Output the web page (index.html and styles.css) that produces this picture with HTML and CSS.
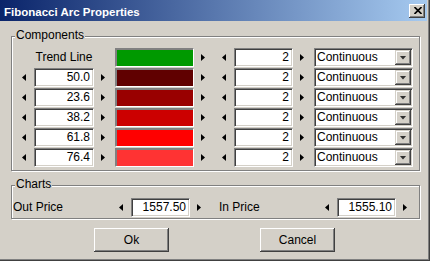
FILE: index.html
```html
<!DOCTYPE html>
<html>
<head>
<meta charset="utf-8">
<link rel="stylesheet" href="styles.css">
</head>
<body>
<div class="window">
  <div class="titlebar">
    <span class="title">Fibonacci Arc Properties</span>
    <span class="close"><svg width="8" height="7" viewBox="0 0 8 7"><path d="M0.5 0 L7.5 7 M7.5 0 L0.5 7" stroke="#000" stroke-width="1.6" fill="none"/></svg></span>
  </div>

  <div class="group components">
    <div class="group-title">Components</div>
    <div class="comp-grid">
      <span></span>
      <span class="label-cell">Trend Line</span>
      <span></span>
      <span class="swatch c1"></span>
      <span class="arr r"></span>
      <span class="arr l"></span>
      <span class="field num">2</span>
      <span class="arr r"></span>
      <span class="field select"><span>Continuous</span><span class="drop"><span class="down"></span></span></span>

      <span class="arr l"></span>
      <span class="field num">50.0</span>
      <span class="arr r"></span>
      <span class="swatch c2"></span>
      <span class="arr r"></span>
      <span class="arr l"></span>
      <span class="field num">2</span>
      <span class="arr r"></span>
      <span class="field select"><span>Continuous</span><span class="drop"><span class="down"></span></span></span>

      <span class="arr l"></span>
      <span class="field num">23.6</span>
      <span class="arr r"></span>
      <span class="swatch c3"></span>
      <span class="arr r"></span>
      <span class="arr l"></span>
      <span class="field num">2</span>
      <span class="arr r"></span>
      <span class="field select"><span>Continuous</span><span class="drop"><span class="down"></span></span></span>

      <span class="arr l"></span>
      <span class="field num">38.2</span>
      <span class="arr r"></span>
      <span class="swatch c4"></span>
      <span class="arr r"></span>
      <span class="arr l"></span>
      <span class="field num">2</span>
      <span class="arr r"></span>
      <span class="field select"><span>Continuous</span><span class="drop"><span class="down"></span></span></span>

      <span class="arr l"></span>
      <span class="field num">61.8</span>
      <span class="arr r"></span>
      <span class="swatch c5"></span>
      <span class="arr r"></span>
      <span class="arr l"></span>
      <span class="field num">2</span>
      <span class="arr r"></span>
      <span class="field select"><span>Continuous</span><span class="drop"><span class="down"></span></span></span>

      <span class="arr l"></span>
      <span class="field num">76.4</span>
      <span class="arr r"></span>
      <span class="swatch c6"></span>
      <span class="arr r"></span>
      <span class="arr l"></span>
      <span class="field num">2</span>
      <span class="arr r"></span>
      <span class="field select"><span>Continuous</span><span class="drop"><span class="down"></span></span></span>
    </div>
  </div>

  <div class="group charts">
    <div class="group-title">Charts</div>
    <div class="chart-grid">
      <span class="plain">Out Price</span>
      <span class="arr l"></span>
      <span class="field num">1557.50</span>
      <span class="arr r"></span>
      <span class="plain">In Price</span>
      <span class="arr l"></span>
      <span class="field num">1555.10</span>
      <span class="arr r"></span>
    </div>
  </div>

  <div class="buttons">
    <span class="btn">Ok</span>
    <span class="btn">Cancel</span>
  </div>
</div>
</body>
</html>
```

FILE: styles.css
```css
* { box-sizing: border-box; }
html, body { margin: 0; padding: 0; }
body {
  background: #d4d0c8;
  font-family: "Liberation Sans", Arial, sans-serif;
  font-size: 12px;
  color: #000;
}
.window {
  width: 430px;
  height: 261px;
  background: #d4d0c8;
  box-shadow: inset -1px -1px #404040, inset -2px -2px #808080;
  overflow: hidden;
}
.titlebar {
  width: 427px;
  height: 21px;
  background: linear-gradient(to right, #0a246a, #a6caf0);
  display: flex;
  align-items: center;
  justify-content: space-between;
  padding: 0 2px 0 4px;
}
.title {
  color: #fff;
  font-weight: bold;
  font-size: 11.5px;
  padding-top: 3px;
}
.close {
  width: 16px;
  height: 14px;
  background: #d4d0c8;
  box-shadow: inset -1px -1px #404040, inset 1px 1px #fff, inset -2px -2px #808080;
  display: flex;
  align-items: center;
  justify-content: center;
  padding-left: 1px;
}
.close svg { display: block; }

.group {
  margin-left: 11px;
  width: 409px;
  border: 1px solid #808080;
  box-shadow: inset 1px 1px #fff, 1px 1px #fff;
}
.components { margin-top: 15px; padding-bottom: 3px; }
.charts { margin-top: 14px; padding-bottom: 1px; }
.group-title {
  width: fit-content;
  margin: -9px 0 0 3px;
  padding: 0 1px;
  line-height: 14px;
  background: #d4d0c8;
}

.comp-grid {
  margin-top: 6px;
  padding-left: 7px;
  display: grid;
  grid-template-columns: 15px 60px 21px 79px 25px 15px 59px 21px 99px;
  grid-auto-rows: 19px;
  row-gap: 1px;
}
.chart-grid {
  margin-top: 7px;
  padding-left: 1px;
  display: grid;
  grid-template-columns: 102px 16px 59px 29px 102px 16px 59px 20px;
  grid-auto-rows: 19px;
}
.label-cell { text-align: center; line-height: 19px; }
.plain { line-height: 19px; }

.arr {
  width: 4px;
  height: 7px;
  background: #000;
  align-self: center;
  justify-self: start;
}
.arr.l { clip-path: polygon(100% 0, 0 50%, 100% 100%); margin-left: 3px; }
.arr.r { clip-path: polygon(0 0, 100% 50%, 0 100%); margin-left: 7px; }
.charts .arr.l { margin-left: 4px; }

.field {
  background: #fff;
  border: 1px solid;
  border-color: #808080 #fff #fff #808080;
  box-shadow: inset 1px 1px #404040, inset -1px -1px #d4d0c8;
  line-height: 17px;
  white-space: nowrap;
}
.num { text-align: right; padding-right: 3px; }

.swatch {
  border: 1px solid;
  border-color: #808080 #fff #fff #808080;
  box-shadow: inset 1px 1px #808080;
}
.c1 { background: #009900; }
.c2 { background: #600000; }
.c3 { background: #990000; }
.c4 { background: #cc0000; }
.c5 { background: #ff0000; }
.c6 { background: #ff3333; }

.select {
  display: flex;
  align-items: center;
  justify-content: space-between;
  padding-left: 2px;
  padding-right: 1px;
}
.drop {
  width: 16px;
  height: 15px;
  background: #d4d0c8;
  box-shadow: inset -1px -1px #404040, inset 1px 1px #d4d0c8, inset -2px -2px #808080, inset 2px 2px #fff;
  display: flex;
  align-items: center;
  justify-content: center;
}
.down {
  width: 7px;
  height: 4px;
  background: #303030;
  clip-path: polygon(0 0, 100% 0, 50% 100%);
}

.buttons {
  margin-top: 9px;
  padding-left: 94px;
  display: flex;
  gap: 91px;
}
.btn {
  width: 75px;
  height: 24px;
  display: flex;
  align-items: center;
  justify-content: center;
  background: #d4d0c8;
  box-shadow: inset -1px -1px #404040, inset 1px 1px #fff, inset -2px -2px #808080;
}
```
